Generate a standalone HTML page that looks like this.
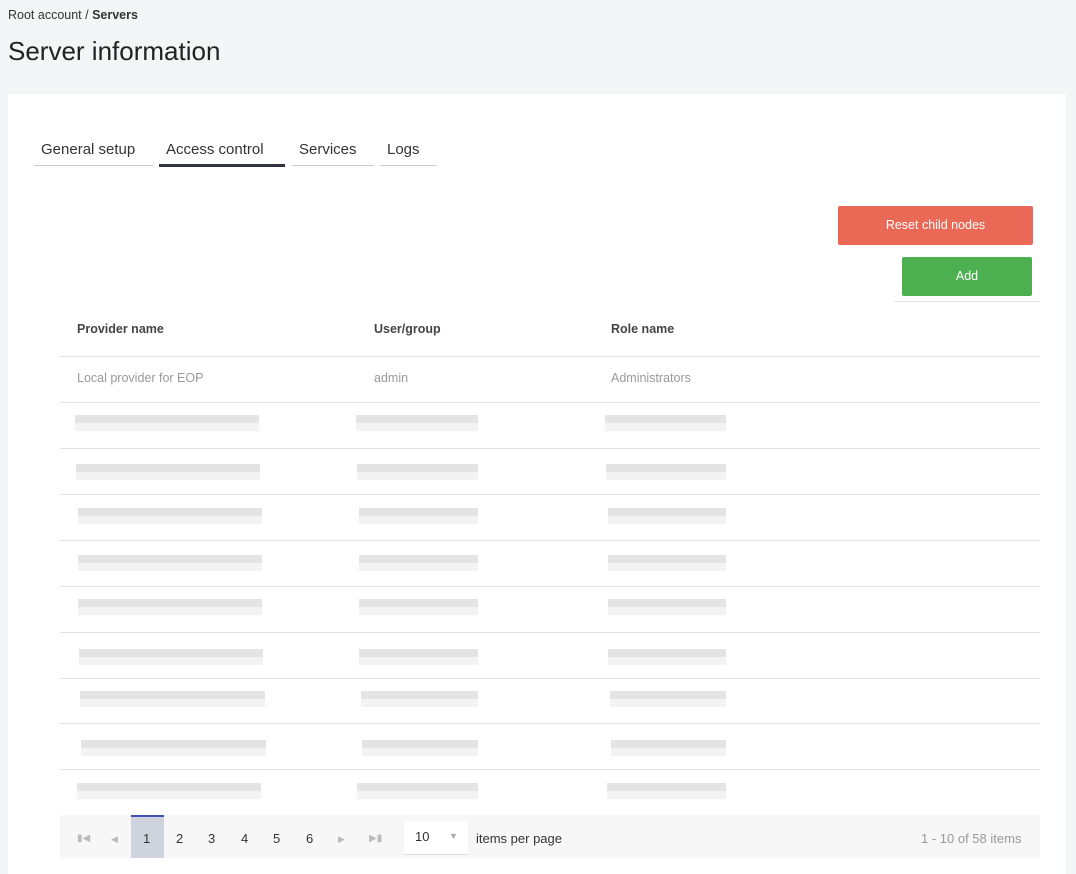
<!DOCTYPE html>
<html><head><meta charset="utf-8"><style>
*{margin:0;padding:0;box-sizing:border-box}
body{width:1076px;height:858px;overflow:hidden;background:#f4f5f7;font-family:"Liberation Sans",sans-serif;position:relative;color:#222}
.a{position:absolute}
.panel{left:8px;top:94px;width:1058px;height:780px;background:#fff}
.tab{font-size:15px;color:#333;top:141px}
.ul{height:1px;background:#ccc;top:165px}
.line{height:1px;background:#e2e2e2;left:60px;width:980px}
.hd{font-size:12.5px;font-weight:bold;color:#444;top:322px}
.cell{font-size:12.5px;color:#999;top:371px}
.bd{height:8px;background:#e4e4e4}
.bl{height:8px;background:#f3f3f3}
.pg{font-size:13px;color:#333;top:831px}
</style></head><body>
<div class="a" style="left:8px;top:8px;font-size:12.5px;color:#333">Root account / <b>Servers</b></div>
<div class="a" style="left:8px;top:36px;font-size:26px;color:#222">Server information</div>
<div class="a panel"></div>
<div class="a tab" style="left:41px">General setup</div>
<div class="a ul" style="left:34px;width:119px"></div>
<div class="a tab" style="left:166px">Access control</div>
<div class="a" style="left:159px;width:126px;top:164px;height:3px;background:#2f3340"></div>
<div class="a tab" style="left:299px">Services</div>
<div class="a ul" style="left:292px;width:82px"></div>
<div class="a tab" style="left:387px">Logs</div>
<div class="a ul" style="left:380px;width:57px"></div>
<div class="a" style="left:838px;top:206px;width:195px;height:39px;background:#ea6956;border-radius:2px;color:#fff;font-size:12.5px;text-align:center;line-height:38px">Reset child nodes</div>
<div class="a" style="left:902px;top:257px;width:130px;height:39px;background:#4caf50;border-radius:2px;color:#fff;font-size:12.5px;text-align:center;line-height:38px">Add</div>
<div class="a" style="left:894px;top:301px;width:146px;height:1px;background:#e2e2e2"></div>
<div class="a hd" style="left:77px">Provider name</div>
<div class="a hd" style="left:374px">User/group</div>
<div class="a hd" style="left:611px">Role name</div>
<div class="a line" style="top:356px"></div>
<div class="a cell" style="left:77px">Local provider for EOP</div>
<div class="a cell" style="left:374px">admin</div>
<div class="a cell" style="left:611px">Administrators</div>
<div class="a line" style="top:402px"></div>
<div class="a line" style="top:448px"></div>
<div class="a line" style="top:494px"></div>
<div class="a line" style="top:540px"></div>
<div class="a line" style="top:586px"></div>
<div class="a line" style="top:632px"></div>
<div class="a line" style="top:678px"></div>
<div class="a line" style="top:723px"></div>
<div class="a line" style="top:769px"></div>

<div class="a bd" style="left:75px;top:415px;width:184px"></div><div class="a bl" style="left:75px;top:423px;width:184px"></div>
<div class="a bd" style="left:356px;top:415px;width:122px"></div><div class="a bl" style="left:356px;top:423px;width:122px"></div>
<div class="a bd" style="left:605px;top:415px;width:121px"></div><div class="a bl" style="left:605px;top:423px;width:121px"></div>

<div class="a bd" style="left:76px;top:464px;width:184px"></div><div class="a bl" style="left:76px;top:472px;width:184px"></div>
<div class="a bd" style="left:357px;top:464px;width:121px"></div><div class="a bl" style="left:357px;top:472px;width:121px"></div>
<div class="a bd" style="left:606px;top:464px;width:120px"></div><div class="a bl" style="left:606px;top:472px;width:120px"></div>

<div class="a bd" style="left:78px;top:508px;width:184px"></div><div class="a bl" style="left:78px;top:516px;width:184px"></div>
<div class="a bd" style="left:359px;top:508px;width:119px"></div><div class="a bl" style="left:359px;top:516px;width:119px"></div>
<div class="a bd" style="left:608px;top:508px;width:118px"></div><div class="a bl" style="left:608px;top:516px;width:118px"></div>

<div class="a bd" style="left:78px;top:555px;width:184px"></div><div class="a bl" style="left:78px;top:563px;width:184px"></div>
<div class="a bd" style="left:359px;top:555px;width:119px"></div><div class="a bl" style="left:359px;top:563px;width:119px"></div>
<div class="a bd" style="left:608px;top:555px;width:118px"></div><div class="a bl" style="left:608px;top:563px;width:118px"></div>

<div class="a bd" style="left:78px;top:599px;width:184px"></div><div class="a bl" style="left:78px;top:607px;width:184px"></div>
<div class="a bd" style="left:359px;top:599px;width:119px"></div><div class="a bl" style="left:359px;top:607px;width:119px"></div>
<div class="a bd" style="left:608px;top:599px;width:118px"></div><div class="a bl" style="left:608px;top:607px;width:118px"></div>

<div class="a bd" style="left:79px;top:649px;width:184px"></div><div class="a bl" style="left:79px;top:657px;width:184px"></div>
<div class="a bd" style="left:359px;top:649px;width:119px"></div><div class="a bl" style="left:359px;top:657px;width:119px"></div>
<div class="a bd" style="left:608px;top:649px;width:118px"></div><div class="a bl" style="left:608px;top:657px;width:118px"></div>

<div class="a bd" style="left:80px;top:691px;width:185px"></div><div class="a bl" style="left:80px;top:699px;width:185px"></div>
<div class="a bd" style="left:361px;top:691px;width:117px"></div><div class="a bl" style="left:361px;top:699px;width:117px"></div>
<div class="a bd" style="left:610px;top:691px;width:116px"></div><div class="a bl" style="left:610px;top:699px;width:116px"></div>

<div class="a bd" style="left:81px;top:740px;width:185px"></div><div class="a bl" style="left:81px;top:748px;width:185px"></div>
<div class="a bd" style="left:362px;top:740px;width:116px"></div><div class="a bl" style="left:362px;top:748px;width:116px"></div>
<div class="a bd" style="left:611px;top:740px;width:115px"></div><div class="a bl" style="left:611px;top:748px;width:115px"></div>

<div class="a bd" style="left:77px;top:783px;width:184px"></div><div class="a bl" style="left:77px;top:791px;width:184px"></div>
<div class="a bd" style="left:357px;top:783px;width:121px"></div><div class="a bl" style="left:357px;top:791px;width:121px"></div>
<div class="a bd" style="left:607px;top:783px;width:119px"></div><div class="a bl" style="left:607px;top:791px;width:119px"></div>

<div class="a" style="left:60px;top:815px;width:980px;height:43px;background:#f7f7f7"></div>
<div class="a" style="left:131px;top:815px;width:33px;height:43px;background:#cfd3de;border-top:2px solid #3f51b5"></div>
<div class="a pg" style="left:77px;color:#bbb;font-size:10px;top:833px">&#9646;&#9664;</div>
<div class="a pg" style="left:111px;color:#bbb;font-size:9px;top:834px">&#9664;</div>
<div class="a pg" style="left:143px">1</div>
<div class="a pg" style="left:176px">2</div>
<div class="a pg" style="left:208px">3</div>
<div class="a pg" style="left:241px">4</div>
<div class="a pg" style="left:273px">5</div>
<div class="a pg" style="left:306px">6</div>
<div class="a pg" style="left:338px;color:#bbb;font-size:9px;top:834px">&#9654;</div>
<div class="a pg" style="left:369px;color:#bbb;font-size:10px;top:833px">&#9654;&#9646;</div>
<div class="a" style="left:404px;top:821px;width:64px;height:34px;background:#fff;border-bottom:1px solid #ddd"></div>
<div class="a pg" style="left:415px;top:829px">10</div>
<div class="a pg" style="left:449px;color:#aaa;font-size:9px;top:831px">&#9660;</div>
<div class="a pg" style="left:476px">items per page</div>
<div class="a pg" style="left:921px;color:#999">1 - 10 of 58 items</div>
</body></html>
